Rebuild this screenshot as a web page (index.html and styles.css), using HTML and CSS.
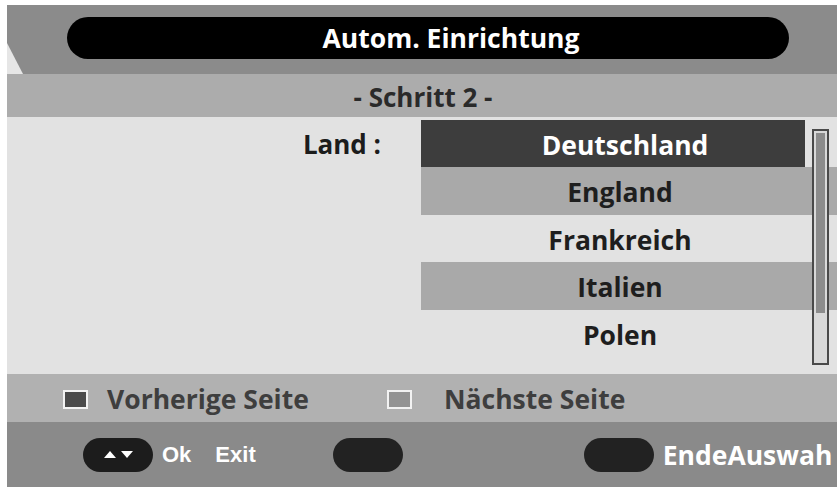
FILE: index.html
```html
<!DOCTYPE html>
<html lang="de">
<head>
<meta charset="utf-8">
<title>Autom. Einrichtung</title>
<link rel="stylesheet" href="styles.css">
</head>
<body>
<div class="screen">
  <header class="head">
    <span class="wedge"></span>
    <div class="title-pill"><span class="title">Autom. Einrichtung</span></div>
  </header>
  <div class="step">- Schritt 2 -</div>
  <main class="content">
    <div class="label-col"><span class="label">Land :</span></div>
    <ul class="list">
      <li class="row sel">Deutschland</li>
      <li class="row alt">England</li>
      <li class="row">Frankreich</li>
      <li class="row alt">Italien</li>
      <li class="row">Polen</li>
    </ul>
    <div class="scrollbar"><div class="thumb"></div></div>
  </main>
  <div class="legend">
    <span class="sq dark"></span><span class="ltext first">Vorherige Seite</span>
    <span class="sq mid"></span><span class="ltext second">Nächste Seite</span>
  </div>
  <footer class="bar">
    <span class="pill p1"><span class="tri up"></span><span class="tri down"></span></span>
    <span class="btxt ok">Ok</span>
    <span class="btxt exit">Exit</span>
    <span class="pill p2"></span>
    <span class="pill p3"></span>
    <span class="ende">EndeAuswah</span>
  </footer>
</div>
</body>
</html>
```

FILE: styles.css
```css
html, body {
  margin: 0;
  padding: 0;
  background: #ffffff;
}
body {
  width: 837px;
  height: 489px;
  overflow: hidden;
}
.screen {
  margin: 5px 0 0 7px;
  width: 830px;
  height: 482px;
  display: flex;
  flex-direction: column;
  font-family: "Open Sans", "DejaVu Sans", sans-serif;
  font-weight: 700;
  overflow: hidden;
}
.head {
  position: relative;
  height: 69px;
  background: #8b8b8b;
  padding: 12px 0 0 60px;
  box-sizing: border-box;
  flex: none;
}
.wedge {
  position: absolute;
  left: 0;
  top: 38px;
  width: 16px;
  height: 31px;
  background: #e6e6e6;
  clip-path: polygon(0 0, 100% 100%, 0 100%);
}
.title-pill {
  width: 722px;
  height: 42px;
  background: #000;
  border-radius: 21px;
  display: flex;
  align-items: center;
  justify-content: center;
  padding-left: 46px;
  box-sizing: border-box;
}
.title {
  color: #fff;
  font-size: 26.5px;
  line-height: 1;
}
.step {
  height: 43px;
  flex: none;
  background: #acacac;
  color: #2a2a2a;
  font-size: 26px;
  line-height: 1;
  display: flex;
  align-items: center;
  justify-content: center;
  padding: 2px 0 0 2px;
  box-sizing: border-box;
}
.content {
  position: relative;
  height: 257px;
  flex: none;
  background: #e2e2e2;
  display: flex;
  padding-top: 3px;
  box-sizing: border-box;
}
.label-col {
  width: 414px;
  height: 47px;
  display: flex;
  align-items: center;
  justify-content: flex-end;
  padding-right: 40px;
  box-sizing: border-box;
}
.label {
  color: #1c1c1c;
  font-size: 26px;
  line-height: 1;
}
.list {
  list-style: none;
  margin: 0;
  padding: 0;
  width: 416px;
}
.row {
  height: 47.5px;
  display: flex;
  align-items: center;
  justify-content: center;
  padding: 3px 18px 0 0;
  box-sizing: border-box;
  color: #1e1e1e;
  font-size: 26.5px;
  line-height: 1;
}
.row.sel {
  height: 47px;
  padding-right: 8px;
  color: #fff;
  background: linear-gradient(to right, #3d3d3d 384px, transparent 384px);
}
.row.alt {
  background: #a9a9a9;
}
.scrollbar {
  position: absolute;
  left: 805px;
  top: 12px;
  width: 17px;
  height: 236px;
  border: 2px solid #4a4a4a;
  box-sizing: border-box;
  background: #d9d9d9;
  padding: 2px;
}
.thumb {
  height: 180px;
  background: #8c8c8c;
}
.legend {
  height: 48px;
  flex: none;
  background: #b1b1b1;
  display: flex;
  align-items: center;
  padding-left: 56px;
  padding-top: 2px;
  box-sizing: border-box;
}
.sq {
  width: 25px;
  height: 19px;
  border: 2px solid #f2f2f2;
  box-sizing: border-box;
  flex: none;
}
.sq.dark { background: #4a4a4a; }
.sq.mid { background: #939393; }
.ltext {
  color: #3e3e3e;
  font-size: 26.5px;
  line-height: 1;
}
.ltext.first {
  width: 280px;
  margin-left: 19px;
}
.ltext.second {
  margin-left: 32px;
}
.bar {
  height: 65px;
  flex: none;
  background: #8a8a8a;
  display: flex;
  align-items: center;
  padding-left: 76px;
  box-sizing: border-box;
  white-space: nowrap;
}
.pill {
  width: 70px;
  height: 34px;
  border-radius: 17px;
  background: #222;
  flex: none;
}
.p1 {
  display: flex;
  align-items: center;
  justify-content: center;
  gap: 5px;
  background: #1c1c1c;
}
.tri {
  width: 0;
  height: 0;
  border-left: 6px solid transparent;
  border-right: 6px solid transparent;
}
.tri.up { border-bottom: 7px solid #fff; }
.tri.down { border-top: 7px solid #fff; }
.btxt {
  color: #fff;
  font-family: "Liberation Sans", Arial, sans-serif;
  font-size: 22px;
}
.ok { margin-left: 9px; }
.exit { margin-left: 24px; }
.p2 { margin-left: 77px; }
.p3 { margin-left: 181px; }
.ende {
  color: #fff;
  font-size: 26.5px;
  margin-left: 9px;
}
```
